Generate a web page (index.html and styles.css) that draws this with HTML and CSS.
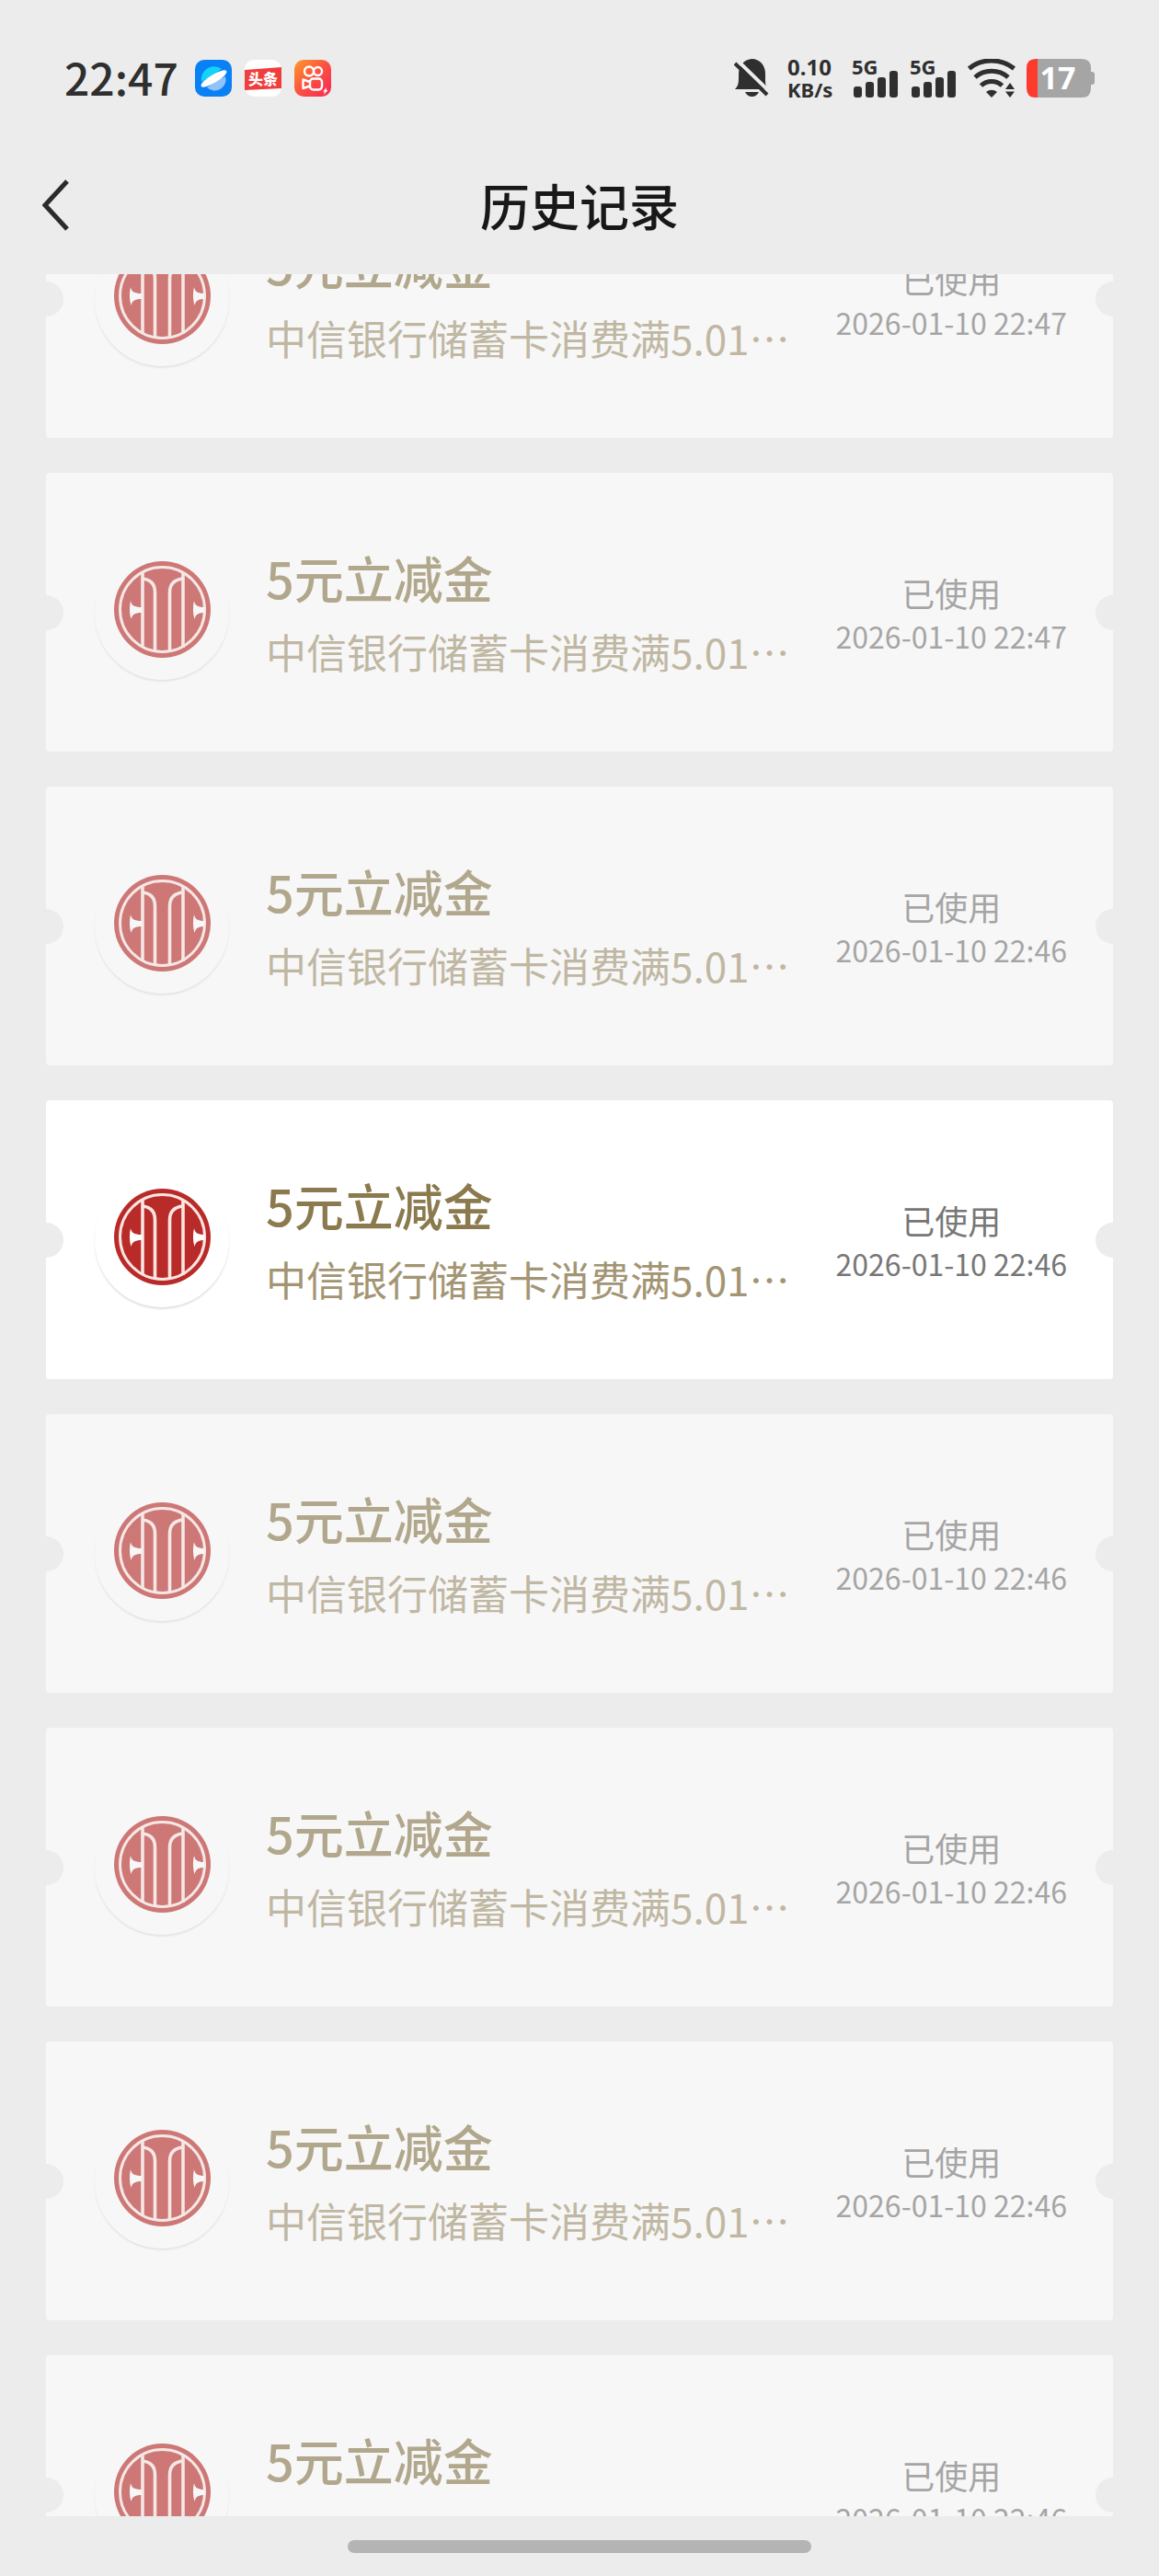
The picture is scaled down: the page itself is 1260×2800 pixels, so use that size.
FILE: index.html
```html
<!DOCTYPE html>
<html lang="zh-CN">
<head>
    <meta charset="UTF-8">
    <meta name="viewport" content="width=device-width, initial-scale=1.0">
    <title>历史记录</title>
    <link rel="stylesheet" href="styles.css">
</head>
<body>

    <!-- 银行标志 -->
    <svg class="sprite" aria-hidden="true">
        <symbol id="bank-logo" viewBox="0 0 105 105">
            <circle cx="52.5" cy="52.5" r="52.5" fill="#b92b29"/>
            <circle cx="52.5" cy="52.5" r="46" fill="none" stroke="#fbe6e2" stroke-width="3"/>
            <g fill="none" stroke="#fbe6e2" stroke-width="3.6">
                <path d="M31 13V94"/>
                <path d="M75 13V94"/>
                <path d="M31 19C40 20 44.500 25 44.500 34V97"/>
                <path d="M75 19C65 20 60.500 25 60.500 34V97"/>
            </g>
            <path fill="#fff" d="M18 43C19 48 22 50 30 50V56C22 56 20 58 18.500 63C16.500 57 16.500 49 18 43Z"/>
            <path fill="#fff" d="M87 43C88 48 91 50 98 50V56C91 56 89 58 87.500 63C85.500 57 85.500 49 87 43Z"/>
        </symbol>
        <symbol id="signal" viewBox="0 0 48 30">
            <rect x="0" y="18" width="9" height="12" rx="3"/>
            <rect x="13" y="13" width="9" height="17" rx="3"/>
            <rect x="26" y="8" width="9" height="22" rx="3"/>
            <rect x="39" y="1" width="9" height="29" rx="3"/>
        </symbol>
    </svg>

    <!-- 状态栏 -->
    <div class="status-bar">
        <div class="status-left">
            <span class="clock">22:47</span>
            <svg class="app-icon" viewBox="0 0 40 40">
                <rect width="40" height="40" rx="10" fill="#0a80f5"/>
                <path d="M7 24A14 14 0 0 1 29 10Z" fill="#11d4f7"/>
                <path d="M13 30A12 12 0 0 0 33 18Z" fill="#90c3fc"/>
                <ellipse cx="20.500" cy="20.500" rx="16" ry="4.500" transform="rotate(-31 20.500 20.500)" fill="#fff"/>
            </svg>
            <svg class="app-icon" viewBox="0 0 40 40">
                <rect width="40" height="40" rx="10" fill="#fff"/>
                <path d="M0 11L40 8V31L0 33Z" fill="#f03e3c"/>
                <text class="app-text" x="20" y="27" text-anchor="middle">头条</text>
            </svg>
            <svg class="app-icon" viewBox="0 0 40 40">
                <defs>
                    <linearGradient id="orange" x1="0" y1="0" x2="1" y2="1">
                        <stop offset="0" stop-color="#fd9a2c"/>
                        <stop offset="0.5" stop-color="#fb5142"/>
                        <stop offset="1" stop-color="#f92652"/>
                    </linearGradient>
                </defs>
                <rect width="40" height="40" rx="10" fill="url(#orange)"/>
                <g fill="none" stroke="#fff" stroke-width="2.400">
                    <circle cx="16" cy="12.500" r="5"/>
                    <circle cx="25.500" cy="12.500" r="4.500"/>
                    <rect x="17" y="20.500" width="13" height="12" rx="3.500"/>
                    <path d="M17 24L9.500 21.500V31L17 28.500" stroke-linejoin="round"/>
                </g>
                <path d="M35 30L31 34.500H33L32 38L36.500 33H34.500Z" fill="#fff"/>
            </svg>
        </div>
        <div class="status-right">
            <svg class="bell" viewBox="0 0 38 42">
                <path d="M1 33C4 30 5 27 5 22V17C5 8 10 1 19 0C29 0 34 8 34 16V24C34 28 35 31 37 33Z"/>
                <path d="M12 36H27C25 40 22 41 19.500 41C17 41 14 40 12 36Z"/>
                <path class="bell-gap" d="M3 1L39 36"/>
                <path class="bell-slash" d="M1 5L36 39"/>
            </svg>
            <div class="net-speed">
                <span class="net-value">0.10</span>
                <span class="net-unit">KB/s</span>
            </div>
            <div class="sim">
                <span class="sim-label">5G</span>
                <svg class="sim-bars"><use href="#signal"/></svg>
            </div>
            <div class="sim">
                <span class="sim-label">5G</span>
                <svg class="sim-bars"><use href="#signal"/></svg>
            </div>
            <svg class="wifi" viewBox="0 0 52 42">
                <g fill="none" stroke="#2f2f2f" stroke-width="5">
                    <path d="M1.500 10.500C15 -1 36 -1 50.500 10.500"/>
                    <path d="M8 20C18 11 34 11 44 20"/>
                    <path d="M14.500 29C21 23 31 23 37.500 29"/>
                </g>
                <path d="M20 36C24 33 28 33 32 36L26 42Z"/>
                <path d="M46 26L51 33H41Z"/>
                <path d="M41 35.500H51L46 42Z"/>
            </svg>
            <svg class="battery" viewBox="0 0 74 42">
                <path fill="#a5a5a5" d="M12 0H60Q70 0 70 10V14H71Q74 14 74 17V25Q74 28 71 28H70V32Q70 42 60 42H12Z"/>
                <path fill="#fd3b2d" d="M12 0H10Q0 0 0 10V32Q0 42 10 42H12Z"/>
                <text class="battery-text" x="34" y="33" text-anchor="middle">17</text>
            </svg>
        </div>
    </div>

    <!-- 标题栏 -->
    <header class="nav-bar">
        <button type="button" class="btn-back" aria-label="返回">
            <svg class="chevron" viewBox="0 0 30 56"><path d="M27 2L3 28L27 54"/></svg>
        </button>
        <h1>历史记录</h1>
    </header>

    <!-- 券列表 -->
    <main class="coupon-list">
        <div class="coupon used">
            <div class="avatar"><svg class="logo"><use href="#bank-logo"/></svg></div>
            <div class="coupon-info">
                <h2>5元立减金</h2>
                <p>中信银行储蓄卡消费满5.01…</p>
            </div>
            <div class="coupon-state">
                <span class="state">已使用</span>
                <span class="time">2026-01-10 22:47</span>
            </div>
        </div>

        <div class="coupon used">
            <div class="avatar"><svg class="logo"><use href="#bank-logo"/></svg></div>
            <div class="coupon-info">
                <h2>5元立减金</h2>
                <p>中信银行储蓄卡消费满5.01…</p>
            </div>
            <div class="coupon-state">
                <span class="state">已使用</span>
                <span class="time">2026-01-10 22:47</span>
            </div>
        </div>

        <div class="coupon used">
            <div class="avatar"><svg class="logo"><use href="#bank-logo"/></svg></div>
            <div class="coupon-info">
                <h2>5元立减金</h2>
                <p>中信银行储蓄卡消费满5.01…</p>
            </div>
            <div class="coupon-state">
                <span class="state">已使用</span>
                <span class="time">2026-01-10 22:46</span>
            </div>
        </div>

        <div class="coupon">
            <div class="avatar"><svg class="logo"><use href="#bank-logo"/></svg></div>
            <div class="coupon-info">
                <h2>5元立减金</h2>
                <p>中信银行储蓄卡消费满5.01…</p>
            </div>
            <div class="coupon-state">
                <span class="state">已使用</span>
                <span class="time">2026-01-10 22:46</span>
            </div>
        </div>

        <div class="coupon used">
            <div class="avatar"><svg class="logo"><use href="#bank-logo"/></svg></div>
            <div class="coupon-info">
                <h2>5元立减金</h2>
                <p>中信银行储蓄卡消费满5.01…</p>
            </div>
            <div class="coupon-state">
                <span class="state">已使用</span>
                <span class="time">2026-01-10 22:46</span>
            </div>
        </div>

        <div class="coupon used">
            <div class="avatar"><svg class="logo"><use href="#bank-logo"/></svg></div>
            <div class="coupon-info">
                <h2>5元立减金</h2>
                <p>中信银行储蓄卡消费满5.01…</p>
            </div>
            <div class="coupon-state">
                <span class="state">已使用</span>
                <span class="time">2026-01-10 22:46</span>
            </div>
        </div>

        <div class="coupon used">
            <div class="avatar"><svg class="logo"><use href="#bank-logo"/></svg></div>
            <div class="coupon-info">
                <h2>5元立减金</h2>
                <p>中信银行储蓄卡消费满5.01…</p>
            </div>
            <div class="coupon-state">
                <span class="state">已使用</span>
                <span class="time">2026-01-10 22:46</span>
            </div>
        </div>

        <div class="coupon used">
            <div class="avatar"><svg class="logo"><use href="#bank-logo"/></svg></div>
            <div class="coupon-info">
                <h2>5元立减金</h2>
                <p>中信银行储蓄卡消费满5.01…</p>
            </div>
            <div class="coupon-state">
                <span class="state">已使用</span>
                <span class="time">2026-01-10 22:46</span>
            </div>
        </div>
    </main>

    <!-- 底部手势条 -->
    <footer class="home-bar"><div class="home-line"></div></footer>

</body>
</html>
```
FILE: styles.css
```css
* {
    box-sizing: border-box;
}
body {
    font-family: "Noto Sans CJK SC", sans-serif;
    margin: 0;
    background-color: #ececec;
    display: flex;
    flex-direction: column;
    height: 100vh;
    overflow: hidden;
}
h1, h2, p {
    margin: 0;
}
svg {
    display: block;
    flex-shrink: 0;
}
.sprite {
    position: absolute;
    width: 0;
    height: 0;
}

/* 状态栏 */
.status-bar {
    display: flex;
    justify-content: space-between;
    align-items: center;
    flex-shrink: 0;
    height: 152px;
    padding: 18px 70px 0 70px;
    color: #2f2f2f;
    fill: #2f2f2f;
}
.status-left {
    display: flex;
    align-items: center;
    gap: 14px;
}
.clock {
    font-size: 48px;
    line-height: 48px;
    font-weight: 500;
    margin-right: 4px;
    padding-bottom: 4px;
}
.app-icon {
    width: 40px;
    height: 40px;
}
.app-text {
    font-size: 16px;
    font-weight: 900;
    fill: #fff;
}
.status-right {
    display: flex;
    align-items: center;
    gap: 12px;
}
.bell {
    width: 38px;
    height: 42px;
    margin-right: 8px;
}
.bell-gap {
    stroke: #ececec;
    stroke-width: 4;
}
.bell-slash {
    stroke: #2f2f2f;
    stroke-width: 4;
}
.net-speed {
    display: flex;
    flex-direction: column;
    width: 50px;
    margin-right: 8px;
    font-family: "Noto Sans", sans-serif;
    font-weight: 700;
}
.net-value {
    font-size: 24px;
    line-height: 24px;
}
.net-unit {
    font-size: 22px;
    line-height: 24px;
}
.sim {
    position: relative;
    width: 51px;
    height: 42px;
    padding: 12px 0 0 2px;
}
.sim-label {
    position: absolute;
    top: 0;
    left: 0;
    font-family: "Noto Sans", sans-serif;
    font-size: 22px;
    line-height: 16px;
    font-weight: 700;
}
.sim-bars {
    width: 48px;
    height: 30px;
}
.wifi {
    width: 52px;
    height: 42px;
}
.battery {
    width: 74px;
    height: 42px;
    overflow: visible;
}
.battery-text {
    font-family: "Noto Sans", sans-serif;
    font-size: 34px;
    font-weight: 700;
    fill: #fff;
}

/* 标题栏 */
.nav-bar {
    display: grid;
    grid-template-columns: 100px 1fr 100px;
    align-items: center;
    flex-shrink: 0;
    height: 146px;
    padding-bottom: 4px;
    color: #181818;
}
.nav-bar h1 {
    font-size: 54px;
    line-height: 72px;
    font-weight: 500;
    text-align: center;
}
.btn-back {
    background: none;
    border: none;
    padding: 0 0 0 46px;
    cursor: pointer;
}
.chevron {
    width: 30px;
    height: 56px;
    fill: none;
    stroke: #2b2b2b;
    stroke-width: 5;
}

/* 券列表 */
.coupon-list {
    flex: 1;
    min-height: 0;
    overflow: hidden;
    padding: 0 50px;
}
.coupon {
    position: relative;
    display: flex;
    align-items: center;
    height: 303px;
    margin-bottom: 38px;
    padding: 0 50px 0 53px;
    background: #fff;
    border-radius: 4px;
    overflow: hidden;
}
/* 列表已滚动一段 */
.coupon:first-child {
    margin-top: -125px;
}
.coupon::before,
.coupon::after {
    content: "";
    position: absolute;
    top: 50%;
    width: 38px;
    height: 38px;
    margin-top: -19px;
    border-radius: 50%;
    background: #ececec;
}
.coupon::before {
    left: -19px;
}
.coupon::after {
    right: -19px;
}
.coupon.used {
    opacity: 0.6;
}
.avatar {
    display: flex;
    justify-content: center;
    align-items: center;
    flex-shrink: 0;
    width: 146px;
    height: 146px;
    padding-bottom: 6px;
    border-radius: 50%;
    box-shadow: 0 2px 2px rgba(0, 0, 0, 0.12);
}
.logo {
    width: 105px;
    height: 105px;
}
.coupon-info {
    flex: 1;
    min-width: 0;
    margin-left: 40px;
    white-space: nowrap;
}
.coupon-info h2 {
    font-size: 54px;
    line-height: 84px;
    font-weight: 500;
    color: #8b7a4d;
}
.coupon-info p {
    font-size: 44px;
    line-height: 76px;
    font-weight: 400;
    color: #a39573;
}
.coupon-state {
    display: flex;
    flex-direction: column;
    align-items: center;
    padding-top: 4px;
    color: #777;
    font-weight: 400;
}
.state {
    font-size: 36px;
    line-height: 46px;
}
.time {
    font-size: 32px;
    line-height: 48px;
}

/* 底部手势条 */
.home-bar {
    display: flex;
    justify-content: center;
    align-items: center;
    flex-shrink: 0;
    height: 65px;
}
.home-line {
    width: 40%;
    height: 14px;
    border-radius: 7px;
    background: #b4b4b4;
}
```
